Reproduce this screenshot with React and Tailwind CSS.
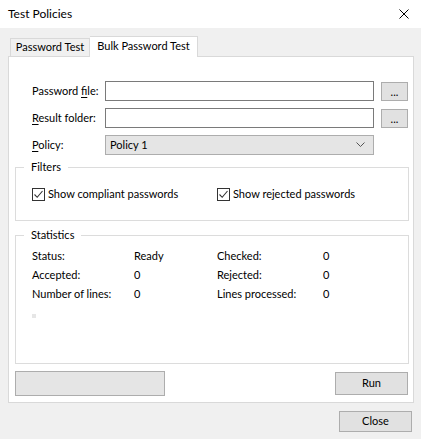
const FONT = { fontFamily: 'Lato, "Liberation Sans", sans-serif' };

function Field({ u, rest, children }) {
  return (
    <div className="flex h-[20px] items-center">
      <div className="w-[73px] whitespace-nowrap text-[11px]">
        {u && <span className="underline underline-offset-2">{u}</span>}
        {rest}
      </div>
      {children}
    </div>
  );
}

function Browse() {
  return (
    <button className="ml-[7px] flex h-[19px] w-[27px] items-end justify-center border border-[#adadad] bg-[#e1e1e1] pb-[3px] text-[11px] leading-none">
      ...
    </button>
  );
}

function Check({ label }) {
  return (
    <label className="flex items-center gap-[3px] whitespace-nowrap text-[11px]">
      <span className="flex h-[13px] w-[13px] items-center justify-center border border-[#333] bg-white">
        <svg width="11" height="11" viewBox="0 0 11 11">
          <path d="M1.5 5.5 L4.2 8.3 L9.5 2" fill="none" stroke="#333" strokeWidth="1.1" />
        </svg>
      </span>
      {label}
    </label>
  );
}

export default function App() {
  const stats = [
    ['Status:', 'Ready', 'Checked:', '0'],
    ['Accepted:', '0', 'Rejected:', '0'],
    ['Number of lines:', '0', 'Lines processed:', '0'],
  ];

  return (
    <div className="flex h-[439px] w-[421px] flex-col bg-[#f0f0f0] text-black" style={FONT}>
      {/* title bar */}
      <div className="flex h-[28px] items-center justify-between bg-white pl-[8px] pr-[12px]">
        <span className="text-[12px]">Test Policies</span>
        <svg width="10" height="10" viewBox="0 0 10 10">
          <path d="M0.5 0.5 L9.5 9.5 M9.5 0.5 L0.5 9.5" stroke="#000" strokeWidth="1" />
        </svg>
      </div>

      {/* tabs */}
      <div className="ml-[8px] mt-[8px] flex w-[406px] items-end">
        <div className="ml-[2px] flex h-[18px] w-[80px] items-center justify-center whitespace-nowrap border border-b-0 border-[#d9d9d9] bg-[#f0f0f0] text-[11px]">
          Password Test
        </div>
        <div className="relative z-10 -mb-px flex h-[21px] w-[108px] items-center justify-center whitespace-nowrap border border-b-0 border-l-0 border-[#d9d9d9] bg-white pb-[2px] text-[11px]">
          Bulk Password Test
        </div>
      </div>

      {/* panel */}
      <div className="ml-[8px] flex h-[347px] w-[406px] flex-col border border-[#d9d9d9] bg-white">
        <div className="flex flex-col gap-[7px] pl-[23px] pt-[24px]">
          <Field rest={<>Password <span className="underline underline-offset-2">f</span>ile:</>}>
            <div className="h-[20px] w-[269px] border border-[#7a7a7a] bg-white" />
            <Browse />
          </Field>
          <Field u="R" rest="esult folder:">
            <div className="h-[20px] w-[269px] border border-[#7a7a7a] bg-white" />
            <Browse />
          </Field>
          <Field u="P" rest="olicy:">
            <div className="flex h-[20px] w-[269px] items-center justify-between border border-[#adadad] bg-[#e5e5e5] pl-[4px] pr-[8px] text-[11px]">
              <span>Policy 1</span>
              <svg width="9" height="6" viewBox="0 0 9 6">
                <path d="M0.5 0.5 L4.5 4.5 L8.5 0.5" fill="none" stroke="#555" strokeWidth="1" />
              </svg>
            </div>
          </Field>
        </div>

        <fieldset className="ml-[6px] mt-[4px] h-[62px] w-[394px] border border-[#dcdcdc] pl-[16px] pt-[11px]">
          <legend className="ml-[-8px] px-[7px] text-[11px] leading-[16px]">Filters</legend>
          <div className="flex">
            <div className="w-[185px]">
              <Check label="Show compliant passwords" />
            </div>
            <Check label="Show rejected passwords" />
          </div>
        </fieldset>

        <fieldset className="ml-[6px] mt-[6px] h-[137px] w-[394px] border border-[#dcdcdc] pl-[16px] pt-[5px]">
          <legend className="ml-[-8px] px-[7px] text-[11px] leading-[16px]">Statistics</legend>
          <div className="grid grid-cols-[102px_83px_106px_1fr] gap-y-[3px] whitespace-nowrap text-[11px] leading-[16px]">
            {stats.map((r) =>
              r.map((c, i) => <div key={r[0] + i}>{c}</div>)
            )}
          </div>
          <div className="mt-[12px] h-[4px] w-[4px] bg-[#e6e6e6]" />
        </fieldset>

        <div className="ml-[6px] mt-[7px] flex w-[393px] items-center justify-between">
          <div className="h-[25px] w-[150px] border border-[#adadad] bg-[#e5e5e5]" />
          <button className="h-[23px] w-[73px] border border-[#adadad] bg-[#e1e1e1] text-[11px]">Run</button>
        </div>
      </div>

      <div className="mr-[9px] mt-[8px] flex justify-end">
        <button className="h-[21px] w-[73px] border border-[#adadad] bg-[#e1e1e1] text-[11px]">Close</button>
      </div>
    </div>
  );
}
